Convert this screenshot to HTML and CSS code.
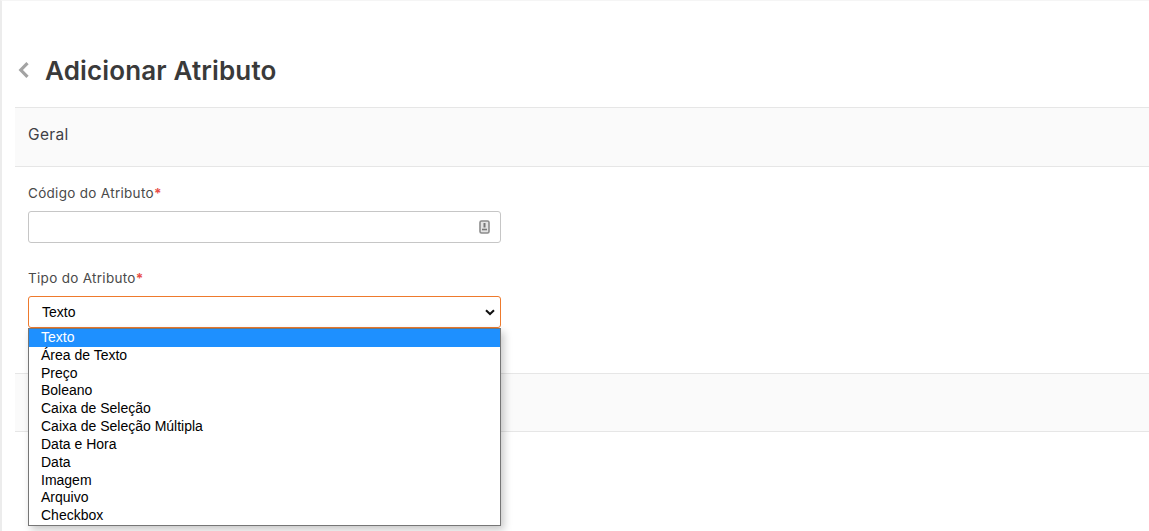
FILE: index.html
```html
<!DOCTYPE html>
<html lang="pt-BR">

<head>
    <meta charset="UTF-8">
    <meta name="viewport" content="width=device-width, initial-scale=1.0">
    <title>Adicionar Atributo</title>
    <link rel="stylesheet" href="styles.css">
</head>

<body>
    <div class="page">
        <div class="page-title">
            <svg class="back-icon" width="12" height="16" viewBox="0 0 12 16">
                <path d="M10.5 1.2 L3.8 8 L10.5 14.8" fill="none" stroke="#a3a3a3" stroke-width="3.2"/>
            </svg>
            <h1>Adicionar Atributo</h1>
        </div>

        <div class="section-head">Geral</div>

        <div class="section-body">
            <div class="field">
                <label>Código do Atributo<span class="req">*</span></label>
                <div class="input-box">
                    <svg class="input-icon" width="11" height="14" viewBox="0 0 11 14">
                        <rect x="1" y="1" width="9" height="12" rx="1.5" fill="#e4e4e4" stroke="#8c8c8c" stroke-width="1.6"/>
                        <path d="M5.5 3 V7.5" stroke="#777" stroke-width="2"/>
                        <path d="M3 9.5 H8" stroke="#777" stroke-width="1.6"/>
                    </svg>
                </div>
            </div>

            <div class="field field-select">
                <label>Tipo do Atributo<span class="req">*</span></label>
                <div class="select-box">
                    <span>Texto</span>
                    <svg width="10" height="7" viewBox="0 0 10 7">
                        <path d="M1 1.2 L5 5 L9 1.2" fill="none" stroke="#111" stroke-width="2"/>
                    </svg>
                </div>
                <ul class="select-list">
                    <li class="selected">Texto</li>
                    <li>Área de Texto</li>
                    <li>Preço</li>
                    <li>Boleano</li>
                    <li>Caixa de Seleção</li>
                    <li>Caixa de Seleção Múltipla</li>
                    <li>Data e Hora</li>
                    <li>Data</li>
                    <li>Imagem</li>
                    <li>Arquivo</li>
                    <li>Checkbox</li>
                </ul>
            </div>
        </div>

        <div class="section-head section-empty"></div>
    </div>
</body>

</html>
```

FILE: styles.css
```css
html,
body {
    margin: 0;
    height: 531px;
    overflow: hidden;
    background: #fff;
}

body {
    font-family: "Inter", "DejaVu Sans", sans-serif;
    color: #3a3a3a;
}

.page {
    height: 530px;
    border-top: 1px solid #f5f5f5;
    border-left: 2px solid #ececec;
    padding-left: 13px;
}

.page-title {
    height: 106px;
    display: flex;
    align-items: center;
    padding-top: 32px;
    box-sizing: border-box;
    padding-left: 2px;
}

.back-icon {
    margin-right: 16px;
}

.page-title h1 {
    margin: 0;
    font-size: 26px;
    font-weight: 600;
    letter-spacing: 0.15px;
    color: #3a3a3a;
}

.section-head {
    height: 58px;
    line-height: 53px;
    padding-left: 13px;
    background: #fafafa;
    border-top: 1px solid #e6e6e6;
    border-bottom: 1px solid #e6e6e6;
    font-size: 15.5px;
    letter-spacing: 0.35px;
    color: #3f3f46;
}

.section-empty {
    height: 57px;
}

.section-body {
    padding: 16px 13px 0;
    height: 206px;
    box-sizing: border-box;
}

.field {
    width: 473px;
    margin-bottom: 25px;
}

.field-select {
    position: relative;
}

.field label {
    display: block;
    font-size: 13.5px;
    letter-spacing: 0.3px;
    line-height: 20px;
    margin-bottom: 8px;
    color: #4a4a4a;
}

.req {
    color: #e8504a;
    font-weight: 700;
}

.input-box {
    height: 32px;
    box-sizing: border-box;
    border: 1px solid #c6c6c6;
    border-radius: 3px;
    display: flex;
    align-items: center;
    justify-content: flex-end;
    padding-right: 10px;
}

.select-box {
    height: 32px;
    box-sizing: border-box;
    border: 1px solid #ee7a2d;
    border-radius: 3px;
    display: flex;
    align-items: center;
    justify-content: space-between;
    padding: 0 5px 0 13px;
    font-family: "Liberation Sans", Arial, sans-serif;
    font-size: 14px;
    color: #000;
}

.select-list {
    position: absolute;
    left: 0;
    top: 60px;
    width: 473px;
    box-sizing: border-box;
    margin: 0;
    padding: 0;
    list-style: none;
    background: #fff;
    border: 1px solid #767676;
    box-shadow: 3px 4px 8px rgba(0, 0, 0, 0.22);
    font-family: "Liberation Sans", Arial, sans-serif;
    font-size: 14px;
    color: #000;
}

.select-list li {
    height: 17.82px;
    line-height: 17.82px;
    padding-left: 12px;
}

.select-list li.selected {
    background: #1e90ff;
    color: #fff;
}
```
